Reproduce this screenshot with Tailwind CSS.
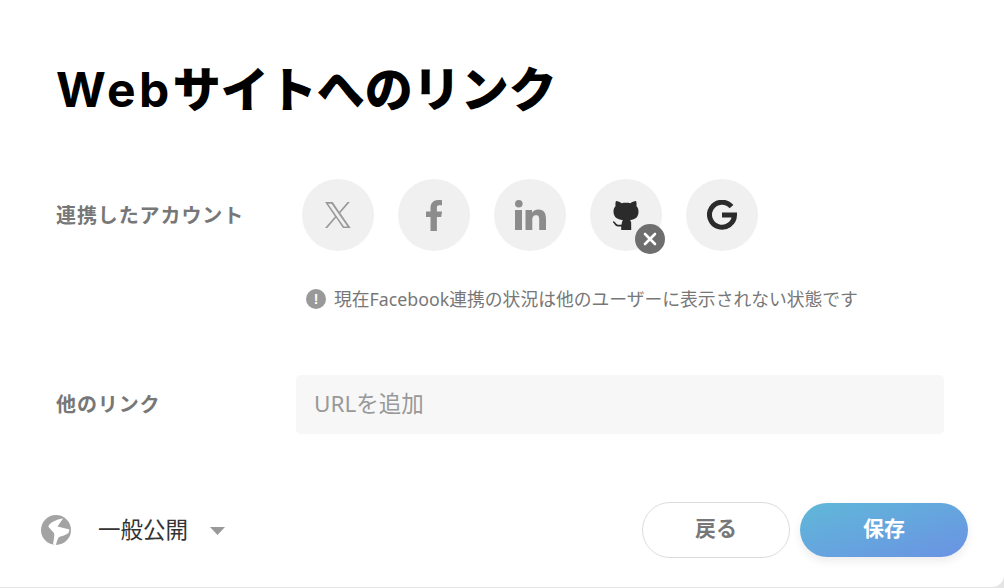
<!DOCTYPE html>
<html lang="ja">
<head>
  <meta charset="UTF-8">
  <title>Webサイトへのリンク</title>
  <script src="https://cdn.jsdelivr.net/npm/@tailwindcss/browser@4"></script>
</head>
<body class="bg-white">
<div class="w-[1004px] h-[588px] overflow-hidden bg-[#e5e5e5]">
  <div class="w-full h-[587px] bg-white rounded-br-[12px] flex flex-col font-['Noto_Sans','Noto_Sans_CJK_JP',sans-serif]">
    <!-- Title -->
    <h1 class="pl-[56px] pt-[52px] h-[179px] text-[48px] leading-[68px] font-black text-black font-['Noto_Sans_CJK_JP',sans-serif]"><span class="font-['Inter',sans-serif] font-bold tracking-[3.500px]">Web</span>サイトへのリンク</h1>

    <!-- Linked accounts -->
    <div class="flex pl-[56px]">
      <div class="w-[246px] h-[72px] pt-[1px] flex items-center text-[20px] tracking-[0.9px] font-bold text-[#777]">連携したアカウント</div>
      <div class="flex flex-col">
        <div class="flex gap-[24px]">
          <div class="w-[72px] h-[72px] rounded-full bg-[#f0f0f0] flex items-center justify-center">
            <svg class="w-[26px] h-[26px]" viewBox="0 0 24 24" fill="#999"><path fill-rule="evenodd" d="M14.1 10.2 22.9 0h-2.1l-7.6 8.9L7.1 0H0l9.2 13.400L0 24h2.100l8.100-9.400 6.400 9.400h7.100zM2.800 1.600h3.200l14.700 21h-3.200z"/></svg>
          </div>
          <div class="w-[72px] h-[72px] rounded-full bg-[#f0f0f0] flex items-center justify-center">
            <svg class="w-[16px] h-[31px]" viewBox="0 0 16 31" fill="#8c8c8c"><path d="M4.500 31V17H0v-5.500h4.500V8c0-5 3-8 7.600-8 2 0 3.900.2 3.900.2v5h-2.700C11 5.200 10.900 6.500 10.900 8.200v3.300h5.100l-.8 5.500h-4.300v14z"/></svg>
          </div>
          <div class="w-[72px] h-[72px] rounded-full bg-[#f0f0f0] flex items-center justify-center">
            <svg class="w-[31px] h-[30px]" viewBox="0 0 31 30" fill="#8c8c8c"><circle cx="3.800" cy="3.800" r="3.800"/><rect x="0" y="10" width="7" height="20"/><path d="M10.500 10h6.500v2.800C18 11 20.300 9.500 23.300 9.500c6 0 7.700 3.900 7.700 9.500v11h-6.800V20c0-2.800-.4-4.800-3-4.800-3 0-3.900 2.100-3.900 4.800v10h-6.800z"/></svg>
          </div>
          <div class="relative w-[72px] h-[72px] rounded-full bg-[#f0f0f0] flex items-center justify-center">
            <svg class="w-[26px] h-[30px] -mt-[1px]" viewBox="0 0 26 30" fill="#2b2b2b"><path d="M3 1c2 0 4 1 5.500 2.200C10 2.800 11.500 2.700 13 2.700s3 .1 4.500.5C19 2 21 1 23 1c.7 1.700.7 3.500.4 5 1.500 1.600 2.100 3.400 2.100 5.500 0 5.500-3 8-8.500 8.700 1 .8 1.200 2 1.200 3.300V30h-10v-3.600c-3.500.7-5.500-.3-6.800-2.500C.8 22.800 0 22.400-.3 22.200l.6-1c1.200.4 2 1 2.800 2.200 1 1.400 2.500 1.700 5.600 1.100 0-1.600.3-3.300 1.300-4.300C4 19.500.5 17 .5 11.500.5 9.400 1.100 7.600 2.600 6 2.300 4.500 2.300 2.700 3 1z"/></svg>
            <div class="absolute left-[45px] top-[45px] w-[30px] h-[30px] rounded-full bg-[#6e6e6e] flex items-center justify-center">
              <svg class="w-[14px] h-[14px]" viewBox="0 0 14 14" stroke="#fff" stroke-width="2.600" stroke-linecap="round"><path d="M2 2l10 10M12 2 2 12"/></svg>
            </div>
          </div>
          <div class="w-[72px] h-[72px] rounded-full bg-[#f0f0f0] flex items-center justify-center">
            <svg class="w-[30px] h-[30px]" viewBox="0 0 30 30" fill="none" stroke="#2b2b2b" stroke-width="5"><path d="M24.500 6.600A12.500 12.500 0 1 0 27.500 15H15"/></svg>
          </div>
        </div>
        <div class="flex items-center mt-[37px] ml-[4px] h-[22px] text-[17.800px] text-[#777]">
          <div class="w-[20px] h-[20px] rounded-full bg-[#999] flex items-center justify-center text-white text-[14px] leading-none font-bold font-['Liberation_Sans',sans-serif] mr-[8px]">!</div>
          <span>現在Facebook連携の状況は他のユーザーに表示されない状態です</span>
        </div>
      </div>
    </div>

    <!-- Other links -->
    <div class="flex items-center pl-[56px] mt-[65px]">
      <div class="w-[240px] text-[20px] tracking-[0.9px] font-bold text-[#777]">他のリンク</div>
      <div class="w-[648px] h-[59px] rounded-[5px] bg-[#f7f7f7] flex items-center px-[18px] pb-[2px] text-[22.500px] text-[#999]">URLを追加</div>
    </div>

    <!-- Footer -->
    <div class="flex items-center justify-between mt-[68px] pl-[41px] pr-[36px]">
      <div class="flex items-center">
        <svg class="w-[30px] h-[30px]" viewBox="0 0 30 30"><circle cx="15" cy="15" r="15" fill="#a3a3a3"/><path fill="#fff" d="M22 3.500C17 4 11 6.500 8 10c-.8 1-.8 1.600 0 2.400l5 5.600c.500 2 .3 4.500-1 11.500l3 .5c.5-3 1.500-6 3-8 3-1 7-2 9.500-4l1-3.500-12-3z"/></svg>
        <span class="ml-[27px] text-[22.500px] text-[#333]">一般公開</span>
        <svg class="ml-[22px] mt-[2px] w-[15px] h-[8px]" viewBox="0 0 15 8" fill="#999"><path d="M0 0h15L7.500 8z"/></svg>
      </div>
      <div class="flex items-center gap-[10px]">
        <button class="w-[148px] h-[56px] pb-[2px] rounded-full border border-[#dcdcdc] bg-white text-[21px] font-bold text-[#777]">戻る</button>
        <button class="w-[168px] h-[54px] pb-[2px] rounded-full bg-gradient-to-br from-[#5fb8d8] to-[#6a92e3] text-[21px] font-bold text-white shadow-[0_4px_10px_rgba(0,0,0,0.08)]">保存</button>
      </div>
    </div>
  </div>
</div>
</body>
</html>
